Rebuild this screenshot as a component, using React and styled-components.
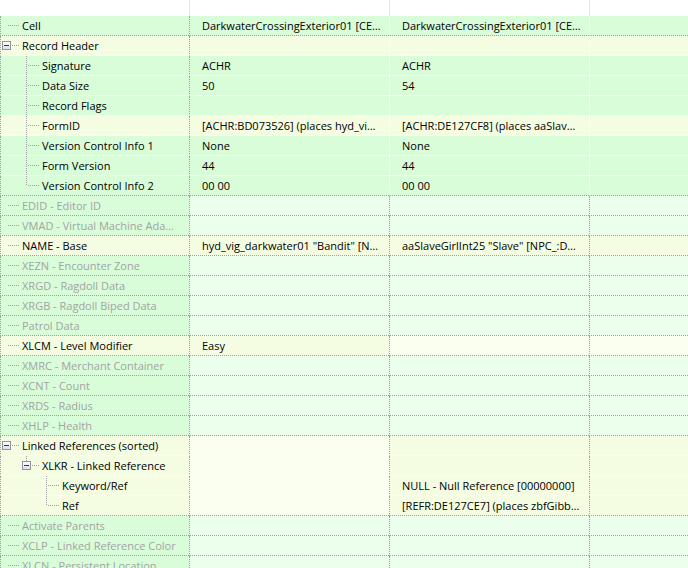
import styled, { createGlobalStyle } from "styled-components";

const GlobalStyle = createGlobalStyle`
  html, body {
    margin: 0;
    padding: 0;
    background: #ffffff;
  }
  body {
    font-family: "Open Sans", "Noto Sans", sans-serif;
    font-size: 11px;
  }
`;

const BG = {
  G: "#d9fdd9",
  Y: "#f4fde1",
  LG: "#ecffec",
  LY: "#fbffef",
};
const GREY = "#a0a0a0";
const WHITE = "#ffffff";
const COLS = "189px 200px 200px 1fr";

const View = styled.div`
  width: 688px;
  height: 568px;
  overflow: hidden;
  background: #ffffff;
`;

const HeaderBar = styled.div`
  display: grid;
  grid-template-columns: ${COLS};
  height: 16px;
`;

const HeaderCell = styled.div`
  border-left: ${({ first }) => (first ? "none" : "1px solid #e3e3e3")};
`;

const Row = styled.div`
  display: grid;
  grid-template-columns: ${COLS};
  height: 20px;
`;

const NameCell = styled.div`
  display: flex;
  align-items: center;
  min-width: 0;
  background: ${({ bg }) => bg};
  border-left: 1px dotted ${GREY};
  border-bottom: 1px dotted ${({ sep }) => sep};
  color: ${({ dim }) => (dim ? "#a3a3a3" : "#000000")};
  white-space: nowrap;
  overflow: hidden;
`;

const Label = styled.span`
  margin-left: 1px;
  line-height: 19px;
`;

const ValueCell = styled.div`
  min-width: 0;
  padding-left: 12px;
  background: ${({ bg }) => bg};
  border-left: 1px dotted ${({ vline }) => vline};
  border-bottom: 1px dotted ${({ sep }) => sep};
  color: #000000;
  line-height: 19px;
  white-space: nowrap;
  overflow: hidden;
`;

const TreeSvg = styled.svg`
  flex: none;
  display: block;
`;

// one 20px column per indent level; the last one holds the node's own connector
const TreeLines = ({ lines, box }) => {
  const width = lines.length * 20;
  const own = lines.length - 1;
  return (
    <TreeSvg width={width} height={19} viewBox={`0 0 ${width} 19`}>
      <g stroke={GREY} strokeWidth="1" strokeDasharray="1 1" fill="none">
        {lines.map((kind, i) => {
          const x = i * 20 + 5;
          const parts = [];
          if (kind === "pass" || kind === "tee") {
            parts.push(<line key="v" x1={x + 0.5} y1={0} x2={x + 0.5} y2={19} />);
          }
          if (kind === "end") {
            parts.push(<line key="v" x1={x + 0.5} y1={0} x2={x + 0.5} y2={10} />);
          }
          if (kind === "tee" || kind === "end" || kind === "stub") {
            parts.push(<line key="h" x1={x + 2} y1={9.5} x2={x + 14} y2={9.5} />);
          }
          return <g key={i}>{parts}</g>;
        })}
      </g>
      {box && (
        <g>
          <defs>
            <linearGradient id="btn" x1="0" y1="0" x2="0" y2="1">
              <stop offset="0" stopColor="#ffffff" />
              <stop offset="1" stopColor="#d8dde6" />
            </linearGradient>
          </defs>
          <rect
            x={own * 20 + 1.5}
            y={5.5}
            width={8}
            height={8}
            fill="url(#btn)"
            stroke="#8e96a4"
          />
          <line
            x1={own * 20 + 3}
            y1={9.5}
            x2={own * 20 + 8}
            y2={9.5}
            stroke="#1f3a5c"
          />
        </g>
      )}
    </TreeSvg>
  );
};

const CELL = "DarkwaterCrossingExterior01 [CE…";

// bg: name column, then three record columns
const rows = [
  { label: "Cell", lines: ["stub"], bg: ["G", "G", "G", "G"], vals: [CELL, CELL], sep: GREY, vline: WHITE },
  { label: "Record Header", lines: ["stub"], box: true, bg: ["Y", "Y", "Y", "Y"], vals: [], sep: WHITE, vline: WHITE },
  { label: "Signature", lines: ["none", "tee"], bg: ["G", "G", "G", "G"], vals: ["ACHR", "ACHR"], sep: WHITE, vline: WHITE },
  { label: "Data Size", lines: ["none", "tee"], bg: ["G", "G", "G", "G"], vals: ["50", "54"], sep: WHITE, vline: WHITE },
  { label: "Record Flags", lines: ["none", "tee"], bg: ["G", "G", "G", "G"], vals: [], sep: WHITE, vline: WHITE },
  {
    label: "FormID",
    lines: ["none", "tee"],
    bg: ["Y", "Y", "Y", "Y"],
    vals: ["[ACHR:BD073526] (places hyd_vi…", "[ACHR:DE127CF8] (places aaSlav…"],
    sep: WHITE,
    vline: WHITE,
  },
  { label: "Version Control Info 1", lines: ["none", "tee"], bg: ["G", "G", "G", "G"], vals: ["None", "None"], sep: WHITE, vline: WHITE },
  { label: "Form Version", lines: ["none", "tee"], bg: ["G", "G", "G", "G"], vals: ["44", "44"], sep: WHITE, vline: WHITE },
  { label: "Version Control Info 2", lines: ["none", "end"], bg: ["G", "G", "G", "G"], vals: ["00 00", "00 00"], sep: GREY, vline: WHITE },
  { label: "EDID - Editor ID", dim: true },
  { label: "VMAD - Virtual Machine Ada…", dim: true },
  {
    label: "NAME - Base",
    bg: ["Y", "Y", "Y", "Y"],
    vals: ['hyd_vig_darkwater01 "Bandit" [N…', 'aaSlaveGirlInt25 "Slave" [NPC_:D…'],
  },
  { label: "XEZN - Encounter Zone", dim: true },
  { label: "XRGD - Ragdoll Data", dim: true },
  { label: "XRGB - Ragdoll Biped Data", dim: true },
  { label: "Patrol Data", dim: true },
  { label: "XLCM - Level Modifier", bg: ["Y", "Y", "LY", "LY"], vals: ["Easy"] },
  { label: "XMRC - Merchant Container", dim: true },
  { label: "XCNT - Count", dim: true },
  { label: "XRDS - Radius", dim: true },
  { label: "XHLP - Health", dim: true },
  { label: "Linked References (sorted)", box: true, bg: ["Y", "LY", "Y", "Y"], vals: [], sep: WHITE },
  { label: "XLKR - Linked Reference", lines: ["none", "end"], box: true, bg: ["Y", "LY", "Y", "Y"], vals: [], sep: WHITE },
  {
    label: "Keyword/Ref",
    lines: ["none", "none", "tee"],
    bg: ["Y", "LY", "Y", "Y"],
    vals: ["", "NULL - Null Reference [00000000]"],
    sep: WHITE,
  },
  {
    label: "Ref",
    lines: ["none", "none", "end"],
    bg: ["Y", "LY", "Y", "Y"],
    vals: ["", "[REFR:DE127CE7] (places zbfGibb…"],
  },
  { label: "Activate Parents", dim: true },
  { label: "XCLP - Linked Reference Color", dim: true },
  { label: "XLCN - Persistent Location", dim: true },
];

const App = () => (
  <>
    <GlobalStyle />
    <View>
      <HeaderBar>
        <HeaderCell first />
        <HeaderCell />
        <HeaderCell />
        <HeaderCell />
      </HeaderBar>
      {rows.map((r) => {
        const bg = r.bg || ["G", "LG", "LG", "LG"];
        const vals = r.vals || [];
        const sep = r.sep || GREY;
        const vline = r.vline || GREY;
        return (
          <Row key={r.label}>
            <NameCell bg={BG[bg[0]]} sep={sep} dim={r.dim}>
              <TreeLines lines={r.lines || ["stub"]} box={r.box} />
              <Label>{r.label}</Label>
            </NameCell>
            <ValueCell bg={BG[bg[1]]} sep={sep} vline={GREY}>
              {vals[0]}
            </ValueCell>
            <ValueCell bg={BG[bg[2]]} sep={sep} vline={vline}>
              {vals[1]}
            </ValueCell>
            <ValueCell bg={BG[bg[3]]} sep={sep} vline={vline} />
          </Row>
        );
      })}
    </View>
  </>
);

export default App;
